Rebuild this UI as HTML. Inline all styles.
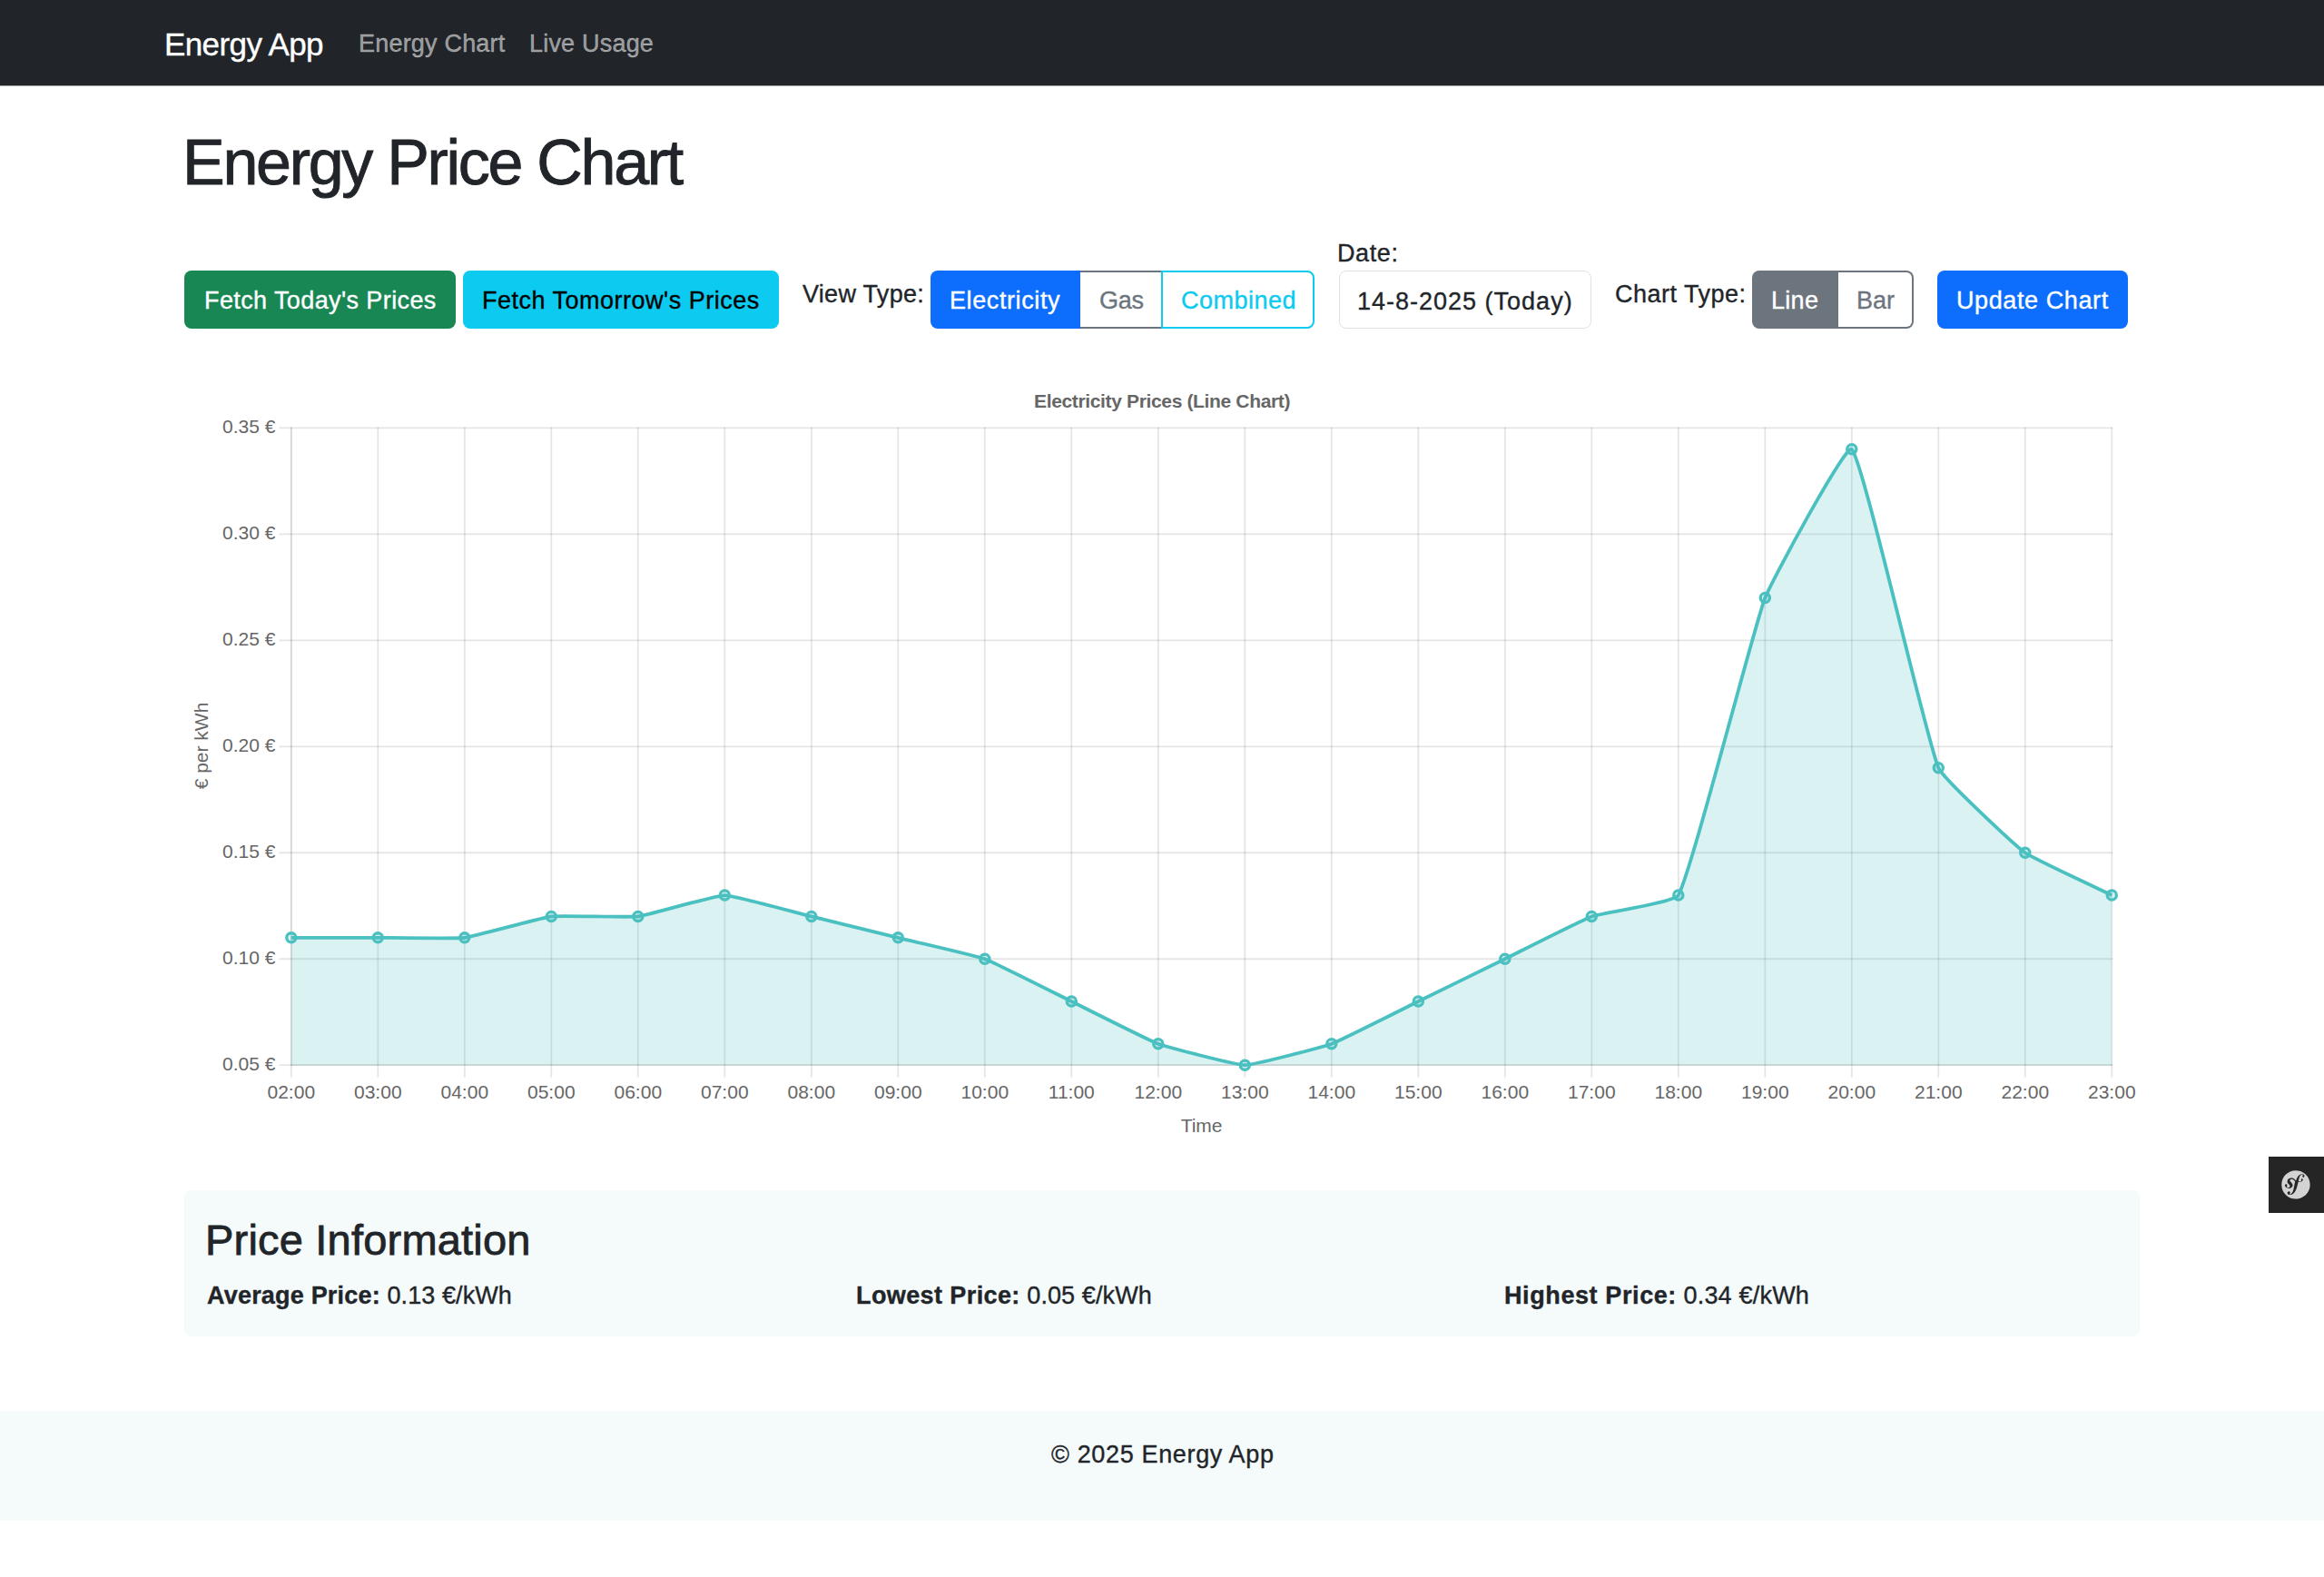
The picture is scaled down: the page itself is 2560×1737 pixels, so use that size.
<!DOCTYPE html>
<html><head><meta charset="utf-8"><title>Energy App</title>
<style>
html,body{margin:0;padding:0;background:#fff;width:2560px;height:1737px;overflow:hidden;}
body{position:relative;font-family:"Liberation Sans", sans-serif;}
.t{position:absolute;white-space:nowrap;line-height:1;font-family:"Liberation Sans", sans-serif;}
b{font-weight:700}
</style></head><body>
<div style="position:absolute;left:0;top:0;width:2560px;height:94px;background:#212529;box-shadow:0 1px 0 rgba(33,37,41,0.45)"></div>
<div class="t" style="left:181px;top:31px;font-size:35px;color:#fff;font-weight:400;letter-spacing:-0.6px;-webkit-text-stroke:0.35px #fff;">Energy App</div>
<div class="t" style="left:395px;top:35px;font-size:27px;color:rgba(255,255,255,0.55);font-weight:400;letter-spacing:0.2px;-webkit-text-stroke:0.35px rgba(255,255,255,0.55);">Energy Chart</div>
<div class="t" style="left:583px;top:35px;font-size:27px;color:rgba(255,255,255,0.55);font-weight:400;letter-spacing:0.2px;-webkit-text-stroke:0.35px rgba(255,255,255,0.55);">Live Usage</div>
<div class="t" style="left:201px;top:144px;font-size:70px;color:#212529;font-weight:400;letter-spacing:-2.3px;-webkit-text-stroke:0.9px #212529;">Energy Price Chart</div>
<div style="position:absolute;left:203px;top:298px;width:299px;height:64px;background:#198754;border-radius:8px;"></div>
<div class="t" style="left:225px;top:318px;font-size:27px;color:#fff;font-weight:400;letter-spacing:0.4px;-webkit-text-stroke:0.35px #fff;">Fetch Today's Prices</div>
<div style="position:absolute;left:510px;top:298px;width:348px;height:64px;background:#0dcaf0;border-radius:8px;"></div>
<div class="t" style="left:531px;top:318px;font-size:27px;color:#000;font-weight:400;letter-spacing:0.5px;-webkit-text-stroke:0.35px #000;">Fetch Tomorrow's Prices</div>
<div class="t" style="left:884px;top:311px;font-size:27px;color:#212529;font-weight:400;letter-spacing:0.3px;-webkit-text-stroke:0.35px #212529;">View Type:</div>
<div style="position:absolute;left:1025px;top:298px;width:165px;height:64px;background:#0d6efd;border-radius:8px 0 0 8px;"></div>
<div class="t" style="left:1046px;top:318px;font-size:27px;color:#fff;font-weight:400;letter-spacing:0.6px;-webkit-text-stroke:0.35px #fff;">Electricity</div>
<div style="position:absolute;left:1190px;top:298px;width:91px;height:64px;background:#fff;border:2px solid #6c757d;box-sizing:border-box;border-radius:0;border-left:none;border-right:none;"></div>
<div class="t" style="left:1211px;top:318px;font-size:27px;color:#6c757d;font-weight:400;letter-spacing:-0.3px;-webkit-text-stroke:0.35px #6c757d;">Gas</div>
<div style="position:absolute;left:1279px;top:298px;width:169px;height:64px;background:#fff;border:2px solid #0dcaf0;box-sizing:border-box;border-radius:0 8px 8px 0;"></div>
<div class="t" style="left:1301px;top:318px;font-size:27px;color:#0dcaf0;font-weight:400;letter-spacing:0.5px;-webkit-text-stroke:0.35px #0dcaf0;">Combined</div>
<div class="t" style="left:1473px;top:266px;font-size:27px;color:#212529;font-weight:400;letter-spacing:0.6px;-webkit-text-stroke:0.35px #212529;">Date:</div>
<div style="position:absolute;left:1475px;top:298px;width:278px;height:64px;background:#fff;border:1.75px solid #dee2e6;box-sizing:border-box;border-radius:8px;"></div>
<div class="t" style="left:1495px;top:319px;font-size:27px;color:#212529;font-weight:400;letter-spacing:1.0px;-webkit-text-stroke:0.35px #212529;">14-8-2025 (Today)</div>
<div class="t" style="left:1779px;top:311px;font-size:27px;color:#212529;font-weight:400;letter-spacing:0.5px;-webkit-text-stroke:0.35px #212529;">Chart Type:</div>
<div style="position:absolute;left:1930px;top:298px;width:95px;height:64px;background:#6c757d;border-radius:8px 0 0 8px;"></div>
<div class="t" style="left:1951px;top:318px;font-size:27px;color:#fff;font-weight:400;letter-spacing:0.3px;-webkit-text-stroke:0.35px #fff;">Line</div>
<div style="position:absolute;left:2025px;top:298px;width:83px;height:64px;background:#fff;border:2px solid #6c757d;box-sizing:border-box;border-radius:0 8px 8px 0;border-left:none;"></div>
<div class="t" style="left:2045px;top:318px;font-size:27px;color:#6c757d;font-weight:400;letter-spacing:0px;-webkit-text-stroke:0.35px #6c757d;">Bar</div>
<div style="position:absolute;left:2134px;top:298px;width:210px;height:64px;background:#0d6efd;border-radius:8px;"></div>
<div class="t" style="left:2155px;top:318px;font-size:27px;color:#fff;font-weight:400;letter-spacing:0.6px;-webkit-text-stroke:0.35px #fff;">Update Chart</div>
<svg style="position:absolute;left:0;top:0" width="2560" height="1300" viewBox="0 0 2560 1300">
<line x1="307.5" y1="471.40" x2="2327.20" y2="471.40" stroke="rgba(0,0,0,0.1)" stroke-width="1.8"/>
<line x1="307.5" y1="588.37" x2="2327.20" y2="588.37" stroke="rgba(0,0,0,0.1)" stroke-width="1.8"/>
<line x1="307.5" y1="705.33" x2="2327.20" y2="705.33" stroke="rgba(0,0,0,0.1)" stroke-width="1.8"/>
<line x1="307.5" y1="822.30" x2="2327.20" y2="822.30" stroke="rgba(0,0,0,0.1)" stroke-width="1.8"/>
<line x1="307.5" y1="939.27" x2="2327.20" y2="939.27" stroke="rgba(0,0,0,0.1)" stroke-width="1.8"/>
<line x1="307.5" y1="1056.23" x2="2327.20" y2="1056.23" stroke="rgba(0,0,0,0.1)" stroke-width="1.8"/>
<line x1="307.5" y1="1173.20" x2="2327.20" y2="1173.20" stroke="rgba(0,0,0,0.1)" stroke-width="1.8"/>
<line x1="320.80" y1="470.50" x2="320.80" y2="1186.70" stroke="rgba(0,0,0,0.1)" stroke-width="1.8"/>
<line x1="416.30" y1="470.50" x2="416.30" y2="1186.70" stroke="rgba(0,0,0,0.1)" stroke-width="1.8"/>
<line x1="511.80" y1="470.50" x2="511.80" y2="1186.70" stroke="rgba(0,0,0,0.1)" stroke-width="1.8"/>
<line x1="607.30" y1="470.50" x2="607.30" y2="1186.70" stroke="rgba(0,0,0,0.1)" stroke-width="1.8"/>
<line x1="702.80" y1="470.50" x2="702.80" y2="1186.70" stroke="rgba(0,0,0,0.1)" stroke-width="1.8"/>
<line x1="798.30" y1="470.50" x2="798.30" y2="1186.70" stroke="rgba(0,0,0,0.1)" stroke-width="1.8"/>
<line x1="893.80" y1="470.50" x2="893.80" y2="1186.70" stroke="rgba(0,0,0,0.1)" stroke-width="1.8"/>
<line x1="989.30" y1="470.50" x2="989.30" y2="1186.70" stroke="rgba(0,0,0,0.1)" stroke-width="1.8"/>
<line x1="1084.80" y1="470.50" x2="1084.80" y2="1186.70" stroke="rgba(0,0,0,0.1)" stroke-width="1.8"/>
<line x1="1180.30" y1="470.50" x2="1180.30" y2="1186.70" stroke="rgba(0,0,0,0.1)" stroke-width="1.8"/>
<line x1="1275.80" y1="470.50" x2="1275.80" y2="1186.70" stroke="rgba(0,0,0,0.1)" stroke-width="1.8"/>
<line x1="1371.30" y1="470.50" x2="1371.30" y2="1186.70" stroke="rgba(0,0,0,0.1)" stroke-width="1.8"/>
<line x1="1466.80" y1="470.50" x2="1466.80" y2="1186.70" stroke="rgba(0,0,0,0.1)" stroke-width="1.8"/>
<line x1="1562.30" y1="470.50" x2="1562.30" y2="1186.70" stroke="rgba(0,0,0,0.1)" stroke-width="1.8"/>
<line x1="1657.80" y1="470.50" x2="1657.80" y2="1186.70" stroke="rgba(0,0,0,0.1)" stroke-width="1.8"/>
<line x1="1753.30" y1="470.50" x2="1753.30" y2="1186.70" stroke="rgba(0,0,0,0.1)" stroke-width="1.8"/>
<line x1="1848.80" y1="470.50" x2="1848.80" y2="1186.70" stroke="rgba(0,0,0,0.1)" stroke-width="1.8"/>
<line x1="1944.30" y1="470.50" x2="1944.30" y2="1186.70" stroke="rgba(0,0,0,0.1)" stroke-width="1.8"/>
<line x1="2039.80" y1="470.50" x2="2039.80" y2="1186.70" stroke="rgba(0,0,0,0.1)" stroke-width="1.8"/>
<line x1="2135.30" y1="470.50" x2="2135.30" y2="1186.70" stroke="rgba(0,0,0,0.1)" stroke-width="1.8"/>
<line x1="2230.80" y1="470.50" x2="2230.80" y2="1186.70" stroke="rgba(0,0,0,0.1)" stroke-width="1.8"/>
<line x1="2326.30" y1="470.50" x2="2326.30" y2="1186.70" stroke="rgba(0,0,0,0.1)" stroke-width="1.8"/>
<line x1="320.80" y1="470.50" x2="320.80" y2="1174.10" stroke="rgba(0,0,0,0.07)" stroke-width="1.8"/>
<line x1="319.90" y1="1173.20" x2="2327.20" y2="1173.20" stroke="rgba(0,0,0,0.07)" stroke-width="1.8"/>
<path d="M320.80,1032.84 C330.35,1032.84 406.75,1032.84 416.30,1032.84 C425.85,1032.84 502.39,1033.99 511.80,1032.84 C521.49,1031.65 597.61,1010.63 607.30,1009.45 C616.71,1008.29 693.39,1010.60 702.80,1009.45 C712.49,1008.26 788.75,986.05 798.30,986.05 C807.85,986.05 884.25,1007.11 893.80,1009.45 C903.35,1011.79 979.75,1030.50 989.30,1032.84 C998.85,1035.18 1075.62,1052.86 1084.80,1056.23 C1094.72,1059.88 1170.75,1098.34 1180.30,1103.02 C1189.85,1107.70 1265.88,1146.16 1275.80,1149.81 C1284.98,1153.18 1361.75,1173.20 1371.30,1173.20 C1380.85,1173.20 1457.62,1153.18 1466.80,1149.81 C1476.72,1146.16 1552.75,1107.70 1562.30,1103.02 C1571.85,1098.34 1648.25,1060.91 1657.80,1056.23 C1667.35,1051.55 1743.38,1013.09 1753.30,1009.45 C1762.48,1006.08 1844.53,993.90 1848.80,986.05 C1863.63,958.81 1932.02,690.13 1944.30,658.55 C1951.12,641.00 2033.26,488.38 2039.80,494.79 C2052.36,507.10 2121.33,813.19 2135.30,845.69 C2140.43,857.64 2220.16,931.45 2230.80,939.27 C2239.26,945.48 2316.75,981.37 2326.30,986.05 L2326.30,1173.20 L320.80,1173.20 Z" fill="rgba(75,192,192,0.2)"/>
<path d="M320.80,1032.84 C330.35,1032.84 406.75,1032.84 416.30,1032.84 C425.85,1032.84 502.39,1033.99 511.80,1032.84 C521.49,1031.65 597.61,1010.63 607.30,1009.45 C616.71,1008.29 693.39,1010.60 702.80,1009.45 C712.49,1008.26 788.75,986.05 798.30,986.05 C807.85,986.05 884.25,1007.11 893.80,1009.45 C903.35,1011.79 979.75,1030.50 989.30,1032.84 C998.85,1035.18 1075.62,1052.86 1084.80,1056.23 C1094.72,1059.88 1170.75,1098.34 1180.30,1103.02 C1189.85,1107.70 1265.88,1146.16 1275.80,1149.81 C1284.98,1153.18 1361.75,1173.20 1371.30,1173.20 C1380.85,1173.20 1457.62,1153.18 1466.80,1149.81 C1476.72,1146.16 1552.75,1107.70 1562.30,1103.02 C1571.85,1098.34 1648.25,1060.91 1657.80,1056.23 C1667.35,1051.55 1743.38,1013.09 1753.30,1009.45 C1762.48,1006.08 1844.53,993.90 1848.80,986.05 C1863.63,958.81 1932.02,690.13 1944.30,658.55 C1951.12,641.00 2033.26,488.38 2039.80,494.79 C2052.36,507.10 2121.33,813.19 2135.30,845.69 C2140.43,857.64 2220.16,931.45 2230.80,939.27 C2239.26,945.48 2316.75,981.37 2326.30,986.05" fill="none" stroke="rgb(75,192,192)" stroke-width="3.8"/>
<circle cx="320.80" cy="1032.84" r="5.1" fill="rgba(75,192,192,0.2)" stroke="rgb(75,192,192)" stroke-width="3.3"/>
<circle cx="416.30" cy="1032.84" r="5.1" fill="rgba(75,192,192,0.2)" stroke="rgb(75,192,192)" stroke-width="3.3"/>
<circle cx="511.80" cy="1032.84" r="5.1" fill="rgba(75,192,192,0.2)" stroke="rgb(75,192,192)" stroke-width="3.3"/>
<circle cx="607.30" cy="1009.45" r="5.1" fill="rgba(75,192,192,0.2)" stroke="rgb(75,192,192)" stroke-width="3.3"/>
<circle cx="702.80" cy="1009.45" r="5.1" fill="rgba(75,192,192,0.2)" stroke="rgb(75,192,192)" stroke-width="3.3"/>
<circle cx="798.30" cy="986.05" r="5.1" fill="rgba(75,192,192,0.2)" stroke="rgb(75,192,192)" stroke-width="3.3"/>
<circle cx="893.80" cy="1009.45" r="5.1" fill="rgba(75,192,192,0.2)" stroke="rgb(75,192,192)" stroke-width="3.3"/>
<circle cx="989.30" cy="1032.84" r="5.1" fill="rgba(75,192,192,0.2)" stroke="rgb(75,192,192)" stroke-width="3.3"/>
<circle cx="1084.80" cy="1056.23" r="5.1" fill="rgba(75,192,192,0.2)" stroke="rgb(75,192,192)" stroke-width="3.3"/>
<circle cx="1180.30" cy="1103.02" r="5.1" fill="rgba(75,192,192,0.2)" stroke="rgb(75,192,192)" stroke-width="3.3"/>
<circle cx="1275.80" cy="1149.81" r="5.1" fill="rgba(75,192,192,0.2)" stroke="rgb(75,192,192)" stroke-width="3.3"/>
<circle cx="1371.30" cy="1173.20" r="5.1" fill="rgba(75,192,192,0.2)" stroke="rgb(75,192,192)" stroke-width="3.3"/>
<circle cx="1466.80" cy="1149.81" r="5.1" fill="rgba(75,192,192,0.2)" stroke="rgb(75,192,192)" stroke-width="3.3"/>
<circle cx="1562.30" cy="1103.02" r="5.1" fill="rgba(75,192,192,0.2)" stroke="rgb(75,192,192)" stroke-width="3.3"/>
<circle cx="1657.80" cy="1056.23" r="5.1" fill="rgba(75,192,192,0.2)" stroke="rgb(75,192,192)" stroke-width="3.3"/>
<circle cx="1753.30" cy="1009.45" r="5.1" fill="rgba(75,192,192,0.2)" stroke="rgb(75,192,192)" stroke-width="3.3"/>
<circle cx="1848.80" cy="986.05" r="5.1" fill="rgba(75,192,192,0.2)" stroke="rgb(75,192,192)" stroke-width="3.3"/>
<circle cx="1944.30" cy="658.55" r="5.1" fill="rgba(75,192,192,0.2)" stroke="rgb(75,192,192)" stroke-width="3.3"/>
<circle cx="2039.80" cy="494.79" r="5.1" fill="rgba(75,192,192,0.2)" stroke="rgb(75,192,192)" stroke-width="3.3"/>
<circle cx="2135.30" cy="845.69" r="5.1" fill="rgba(75,192,192,0.2)" stroke="rgb(75,192,192)" stroke-width="3.3"/>
<circle cx="2230.80" cy="939.27" r="5.1" fill="rgba(75,192,192,0.2)" stroke="rgb(75,192,192)" stroke-width="3.3"/>
<circle cx="2326.30" cy="986.05" r="5.1" fill="rgba(75,192,192,0.2)" stroke="rgb(75,192,192)" stroke-width="3.3"/>
</svg>
<div class="t" style="left:1139px;top:431px;font-size:21px;color:#666;font-weight:700;letter-spacing:-0.35px;">Electricity Prices (Line Chart)</div>
<div class="t" style="left:245px;top:459px;font-size:21px;color:#666;font-weight:400;letter-spacing:0px;">0.35 €</div>
<div class="t" style="left:245px;top:576px;font-size:21px;color:#666;font-weight:400;letter-spacing:0px;">0.30 €</div>
<div class="t" style="left:245px;top:693px;font-size:21px;color:#666;font-weight:400;letter-spacing:0px;">0.25 €</div>
<div class="t" style="left:245px;top:810px;font-size:21px;color:#666;font-weight:400;letter-spacing:0px;">0.20 €</div>
<div class="t" style="left:245px;top:927px;font-size:21px;color:#666;font-weight:400;letter-spacing:0px;">0.15 €</div>
<div class="t" style="left:245px;top:1044px;font-size:21px;color:#666;font-weight:400;letter-spacing:0px;">0.10 €</div>
<div class="t" style="left:245px;top:1161px;font-size:21px;color:#666;font-weight:400;letter-spacing:0px;">0.05 €</div>
<div class="t" style="left:280.8px;width:80px;text-align:center;top:1192px;font-size:21px;color:#666;">02:00</div>
<div class="t" style="left:376.3px;width:80px;text-align:center;top:1192px;font-size:21px;color:#666;">03:00</div>
<div class="t" style="left:471.8px;width:80px;text-align:center;top:1192px;font-size:21px;color:#666;">04:00</div>
<div class="t" style="left:567.3px;width:80px;text-align:center;top:1192px;font-size:21px;color:#666;">05:00</div>
<div class="t" style="left:662.8px;width:80px;text-align:center;top:1192px;font-size:21px;color:#666;">06:00</div>
<div class="t" style="left:758.3px;width:80px;text-align:center;top:1192px;font-size:21px;color:#666;">07:00</div>
<div class="t" style="left:853.8px;width:80px;text-align:center;top:1192px;font-size:21px;color:#666;">08:00</div>
<div class="t" style="left:949.3px;width:80px;text-align:center;top:1192px;font-size:21px;color:#666;">09:00</div>
<div class="t" style="left:1044.8px;width:80px;text-align:center;top:1192px;font-size:21px;color:#666;">10:00</div>
<div class="t" style="left:1140.3px;width:80px;text-align:center;top:1192px;font-size:21px;color:#666;">11:00</div>
<div class="t" style="left:1235.8px;width:80px;text-align:center;top:1192px;font-size:21px;color:#666;">12:00</div>
<div class="t" style="left:1331.3px;width:80px;text-align:center;top:1192px;font-size:21px;color:#666;">13:00</div>
<div class="t" style="left:1426.8px;width:80px;text-align:center;top:1192px;font-size:21px;color:#666;">14:00</div>
<div class="t" style="left:1522.3px;width:80px;text-align:center;top:1192px;font-size:21px;color:#666;">15:00</div>
<div class="t" style="left:1617.8px;width:80px;text-align:center;top:1192px;font-size:21px;color:#666;">16:00</div>
<div class="t" style="left:1713.3px;width:80px;text-align:center;top:1192px;font-size:21px;color:#666;">17:00</div>
<div class="t" style="left:1808.8px;width:80px;text-align:center;top:1192px;font-size:21px;color:#666;">18:00</div>
<div class="t" style="left:1904.3px;width:80px;text-align:center;top:1192px;font-size:21px;color:#666;">19:00</div>
<div class="t" style="left:1999.8px;width:80px;text-align:center;top:1192px;font-size:21px;color:#666;">20:00</div>
<div class="t" style="left:2095.3px;width:80px;text-align:center;top:1192px;font-size:21px;color:#666;">21:00</div>
<div class="t" style="left:2190.8px;width:80px;text-align:center;top:1192px;font-size:21px;color:#666;">22:00</div>
<div class="t" style="left:2286.3px;width:80px;text-align:center;top:1192px;font-size:21px;color:#666;">23:00</div>
<div class="t" style="left:1263.6px;width:120px;text-align:center;top:1229px;font-size:21px;color:#666;">Time</div>
<div class="t" style="left:171px;top:811px;width:100px;text-align:center;font-size:21px;color:#666;transform:rotate(-90deg);transform-origin:50% 50%;">€ per kWh</div>
<div style="position:absolute;left:203px;top:1311px;width:2154px;height:161px;background:#f5fafb;border-radius:8px;"></div>
<div class="t" style="left:226px;top:1342px;font-size:47px;color:#212529;font-weight:400;letter-spacing:0.2px;-webkit-text-stroke:0.8px #212529;">Price Information</div>
<div class="t" style="left:228px;top:1414px;font-size:27px;color:#212529;-webkit-text-stroke:0.35px #212529;"><b style="letter-spacing:0.2px">Average Price:</b> <span style="letter-spacing:0.1px">0.13 €/kWh</span></div>
<div class="t" style="left:943px;top:1414px;font-size:27px;color:#212529;-webkit-text-stroke:0.35px #212529;"><b style="letter-spacing:0.4px">Lowest Price:</b> <span style="letter-spacing:0.1px">0.05 €/kWh</span></div>
<div class="t" style="left:1657px;top:1414px;font-size:27px;color:#212529;-webkit-text-stroke:0.35px #212529;"><b style="letter-spacing:0.6px">Highest Price:</b> <span style="letter-spacing:0.2px">0.34 €/kWh</span></div>
<div style="position:absolute;left:0;top:1554px;width:2560px;height:121px;background:#f5fafb"></div>
<div class="t" style="left:1158px;top:1589px;font-size:27px;color:#212529;font-weight:400;letter-spacing:0.65px;-webkit-text-stroke:0.35px #212529;">© 2025 Energy App</div>
<div style="position:absolute;left:2499px;top:1274px;width:61px;height:62px;background:#252525"></div>
<svg style="position:absolute;left:2512.4px;top:1288.1px" width="33.9" height="33.9" viewBox="0 0 24 24"><path fill="#d3d3d3" d="M12 .9C5.8.9.9 5.8.9 12s5 11.1 11.1 11.1 11.1-5 11.1-11.1S18.2.9 12 .9zm6.2 5.3c-.6 0-1-.3-1-.8 0-.2 0-.4.2-.6.1-.3.2-.3.2-.4 0-.3-.5-.4-.7-.4-1.8.1-2.3 2.5-2.7 4.4l-.2 1c1 .2 1.8 0 2.2-.3.6-.4-.2-.7-.1-1.2.1-.3.5-.5.7-.6.5 0 .7.5.7.9 0 .7-1 1.8-3 1.8l-.6-.1-.6 2.4c-.4 1.600-.8 3.8-2.4 5.7-1.4 1.7-2.9 1.9-3.5 1.9-1.2 0-1.900-.6-2-1.5 0-.8.7-1.3 1.2-1.3.6 0 1.1.5 1.1 1s-.2.6-.4.6c-.1.1-.3.2-.3.4 0 .1.1.3.4.3.5 0 .8-.3 1.1-.5 1.2-.9 1.6-2.7 2.2-5.7l.1-.7.7-3.2c-.8-.6-1.3-1.4-2.4-1.7-.6-.1-1.1.1-1.5.5-.4.5-.2 1.1.2 1.5l.7.6c.7.8 1.2 1.6 1 2.5-.3 1.5-2 2.6-4 1.9-1.8-.6-2.1-1.8-1.9-2.5.2-.6.6-.7 1.1-.6.5.2.6.7.6 1.2l-.1.3c-.2.1-.3.3-.3.4-.1.4.4.6.7.7.7.3 1.6-.2 1.8-.8.1-.6-.2-1-.3-1.1l-.8-.8c-.4-.4-1.2-1.5-.8-2.7.1-.5.4-.9.8-1.300 1-.7 2.1-.9 3.1-.6 1.3.4 1.9 1.3 2.7 2 .4-1.300 1-2.600 1.8-3.600.9-.9 1.8-1.5 2.9-1.5 1.1 0 2 .5 1.9 1.4 0 .4-.2 1.2-.9 1.2z"/></svg>

<script>(function(){var w=window.innerWidth;if(w&&Math.abs(w-2560)>4){document.documentElement.style.zoom=(w/2560);}})();</script>
</body></html>
